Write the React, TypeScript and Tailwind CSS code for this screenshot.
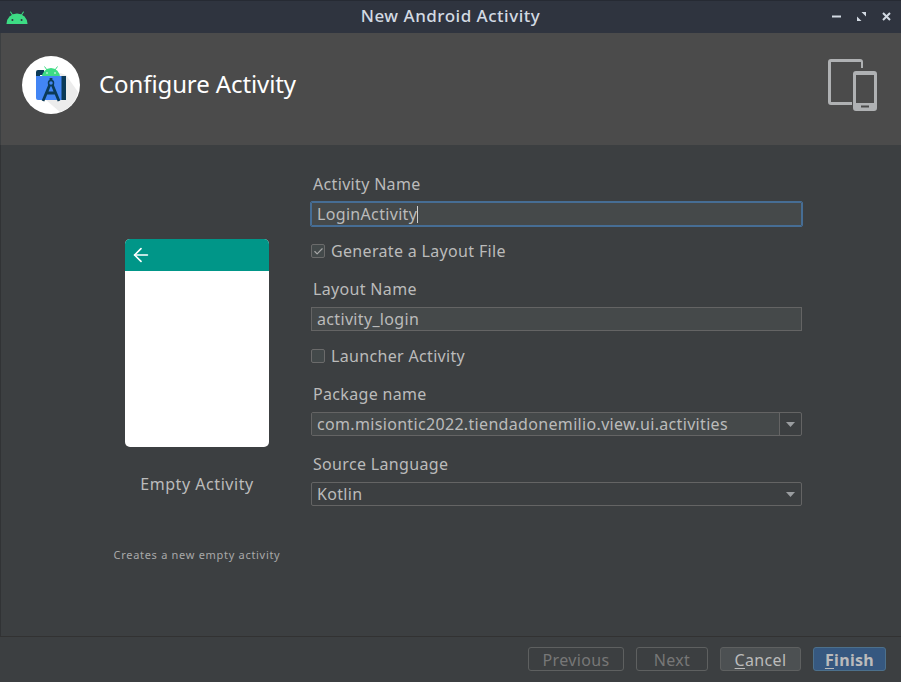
import { ArrowLeft, Check } from "lucide-react";

const font = { fontFamily: '"Noto Sans", "Open Sans", sans-serif' };

function AndroidHead({ className }: { className?: string }) {
  return (
    <svg viewBox="0 0 24 14" className={className}>
      <path d="M0.5 14a11.5 11.5 0 0 1 23 0z" fill="#3ddc84" />
      <path d="M5 1l2.8 4.4M19 1l-2.8 4.4" stroke="#3ddc84" strokeWidth="1.1" strokeLinecap="round" />
      <circle cx="7" cy="9.6" r="1.1" fill="#2f343f" />
      <circle cx="17" cy="9.6" r="1.1" fill="#2f343f" />
    </svg>
  );
}

function StudioLogo() {
  return (
    <div className="w-[58px] h-[58px] rounded-full bg-white flex items-center justify-center shrink-0">
      <svg viewBox="0 0 58 58" className="w-[58px] h-[58px]">
        <path d="M38 17L44 19 L56 36 A28 28 0 0 1 38 56 L24 44z" fill="#ececec" />
        <path d="M16 14h6v5h-4v4h-4v-7a2 2 0 0 1 2-2z" fill="#0b3a57" />
        <path d="M20 21a9 9 0 0 1 18 0z" fill="#3ddc84" />
        <path d="M22.5 10.5l2.5 3.5M35.5 10.5l-2.5 3.5" stroke="#3ddc84" strokeWidth="1" />
        <circle cx="25" cy="17" r="0.8" fill="#fff" />
        <circle cx="33" cy="17" r="0.8" fill="#fff" />
        <path d="M14 20h30v24H16a2 2 0 0 1-2-2z" fill="#4285f4" />
        <path d="M39.5 20H44v24h-4.5z" fill="#0b3a57" />
        <path d="M29 22v3M28.5 27L21 45M29.5 27L37 45M25 37h8" stroke="#0b3a57" strokeWidth="2.8" fill="none" />
        <circle cx="29" cy="27" r="2.5" fill="#4285f4" stroke="#0b3a57" strokeWidth="1.5" />
      </svg>
    </div>
  );
}

function DevicesIcon() {
  return (
    <svg viewBox="0 0 50 52" className="w-[50px] h-[52px]">
      <path
        d="M3 0h29a3 3 0 0 1 3 3v6h-2V3H3v40h21v3H3a3 3 0 0 1-3-3V3a3 3 0 0 1 3-3z"
        fill="#afb1b3"
        fillRule="evenodd"
      />
      <path
        fillRule="evenodd"
        d="M28 12h18a3 3 0 0 1 3 3v34a3 3 0 0 1-3 3H28a3 3 0 0 1-3-3V15a3 3 0 0 1 3-3zM28 16v28h18V16zM33 46.5v2h8v-2z"
        fill="#afb1b3"
      />
    </svg>
  );
}

function TextField({ value, focused }: { value: string; focused?: boolean }) {
  return (
    <div
      className={
        focused
          ? "h-[24px] bg-[#45494a] border border-[#466d94] outline outline-1 outline-[#466d94] rounded-[1px] flex items-center pl-[5px] text-[#bbbbbb] text-[16px] tracking-[0.33px]"
          : "h-[24px] bg-[#45494a] border border-[#646464] flex items-center pl-[5px] text-[#bbbbbb] text-[16px] tracking-[0.33px]"
      }
    >
      {value}
      {focused && <span className="inline-block w-px h-[17px] bg-[#cfcfcf]" />}
    </div>
  );
}

function Caret() {
  return (
    <svg viewBox="0 0 9 5" className="w-[9px] h-[5px]">
      <path d="M0 0h9L4.5 5z" fill="#9a9da0" />
    </svg>
  );
}

function Label({ children }: { children: string }) {
  return <div className="text-[#bbbbbb] text-[16px] tracking-[0.33px] leading-[20px] pl-[2px]">{children}</div>;
}

function CheckRow({ label, checked }: { label: string; checked?: boolean }) {
  return (
    <div className="flex items-center gap-[6px] h-[20px] text-[#bbbbbb] text-[16px] tracking-[0.33px]">
      <div className="w-[14px] h-[14px] bg-[#43494a] border border-[#6b6b6b] rounded-[2px] flex items-center justify-center">
        {checked && <Check className="w-[11px] h-[11px] text-[#a7a7a7]" strokeWidth={2.5} />}
      </div>
      {label}
    </div>
  );
}

function WizardButton({
  width,
  children,
  variant,
}: {
  width: string;
  children: React.ReactNode;
  variant: "disabled" | "normal" | "primary";
}) {
  const styles = {
    disabled: "border-[#5e6060] text-[#777777]",
    normal: "border-[#5e6060] bg-[#4c5052] text-[#bbbbbb]",
    primary: "border-[#4c708c] bg-[#365880] text-[#bbbbbb] font-bold",
  };
  return (
    <div className={`${width} h-[24px] border rounded-[3px] flex items-center justify-center pt-[1px] text-[16px] tracking-[0.33px] ${styles[variant]}`}>
      {children}
    </div>
  );
}

export default function App() {
  return (
    <div className="w-[901px] h-[682px] flex flex-col bg-[#3c3f41] overflow-hidden" style={font}>
      <div className="h-[33px] shrink-0 bg-[#2f343f] border-t border-[#262a33] flex items-center justify-between px-[6px] relative">
        <AndroidHead className="w-[22px] h-[13px]" />
        <div className="absolute inset-0 flex items-center justify-center pb-[2px] text-[#d3dae3] text-[17px] tracking-[0.5px] font-medium">
          New Android Activity
        </div>
        <div className="flex items-center gap-[16px] pr-[4px] pb-[1px]">
          <svg viewBox="0 0 9 9" className="w-[9px] h-[9px]">
            <path d="M0 3.5h9v2H0z" fill="#d3dae3" />
          </svg>
          <svg viewBox="0 0 9 9" className="w-[9px] h-[9px]">
            <path d="M4.5 0H9v4.5zM0 4.5L4.5 9H0z" fill="#d3dae3" />
          </svg>
          <svg viewBox="0 0 9 9" className="w-[9px] h-[9px]">
            <path d="M1 1l7 7M8 1L1 8" stroke="#d3dae3" strokeWidth="2" />
          </svg>
        </div>
      </div>

      <div className="h-[112px] shrink-0 bg-[#4b4b4b] border-l border-[#3c3f41] flex items-center pl-[21px] pr-[23px] pb-[9px]">
        <StudioLogo />
        <div className="ml-[19px] mb-[2px] text-white text-[24px] tracking-[-0.1px] flex-1">Configure Activity</div>
        <DevicesIcon />
      </div>

      <div className="flex-1 flex border-l border-[#313335]">
        <div className="w-[310px] shrink-0 flex flex-col items-center pt-[94px] pl-[82px]">
          <div className="w-[144px] h-[208px] rounded-[5px] bg-white overflow-hidden">
            <div className="h-[32px] bg-[#009688] flex items-center pl-[5px]">
              <ArrowLeft className="w-[22px] h-[22px] text-white" strokeWidth={1.8} />
            </div>
          </div>
          <div className="mt-[25px] text-[#bbbbbb] text-[16px] tracking-[0.55px] leading-[24px]">Empty Activity</div>
          <div className="mt-[52px] text-[#a9a9a9] text-[11px] leading-[14px] tracking-[0.7px] whitespace-nowrap">
            Creates a new empty activity
          </div>
        </div>

        <div className="w-[491px] shrink-0 pt-[29px] flex flex-col">
          <Label>Activity Name</Label>
          <div className="mt-[8px]">
            <TextField value="LoginActivity" focused />
          </div>
          <div className="mt-[15px]">
            <CheckRow label="Generate a Layout File" checked />
          </div>
          <div className="mt-[18px]">
            <Label>Layout Name</Label>
          </div>
          <div className="mt-[8px]">
            <TextField value="activity_login" />
          </div>
          <div className="mt-[15px]">
            <CheckRow label="Launcher Activity" />
          </div>
          <div className="mt-[18px]">
            <Label>Package name</Label>
          </div>
          <div className="mt-[8px] h-[24px] flex border border-[#646464] rounded-[2px] text-[#bbbbbb] text-[16px] tracking-[0.33px]">
            <div className="flex-1 bg-[#45494a] border-r border-[#646464] flex items-center pl-[5px]">
              com.misiontic2022.tiendadonemilio.view.ui.activities
            </div>
            <div className="w-[21px] flex items-center justify-center">
              <Caret />
            </div>
          </div>
          <div className="mt-[18px]">
            <Label>Source Language</Label>
          </div>
          <div className="mt-[8px] h-[24px] flex items-center justify-between border border-[#646464] rounded-[2px] pl-[5px] pr-[6px] text-[#bbbbbb] text-[16px] tracking-[0.33px]">
            Kotlin
            <Caret />
          </div>
        </div>
      </div>

      <div className="h-[46px] shrink-0 border-t border-[#323232] flex items-center justify-end gap-[12px] pr-[15px] pb-[1px]">
        <WizardButton width="w-[96px]" variant="disabled">Previous</WizardButton>
        <WizardButton width="w-[72px]" variant="disabled">Next</WizardButton>
        <WizardButton width="w-[81px]" variant="normal">
          <span className="underline underline-offset-2">C</span>ancel
        </WizardButton>
        <WizardButton width="w-[73px]" variant="primary">
          <span className="underline underline-offset-2">F</span>inish
        </WizardButton>
      </div>
    </div>
  );
}
